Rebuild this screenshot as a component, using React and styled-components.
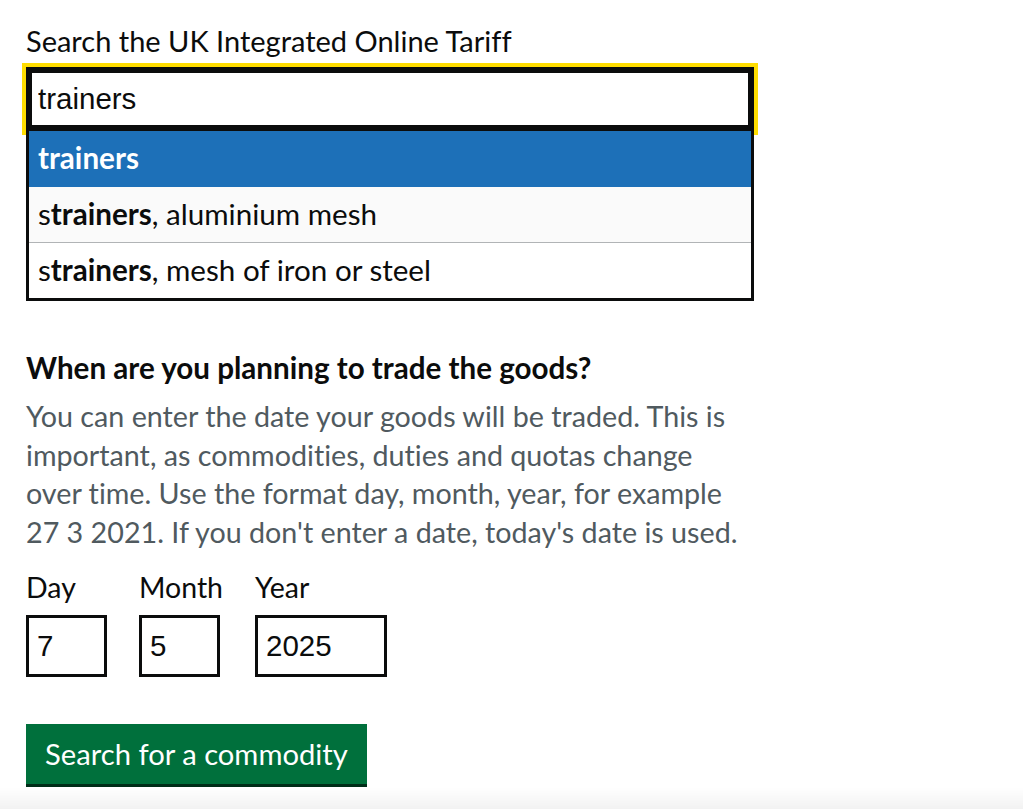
import React from 'react';
import styled, { createGlobalStyle } from 'styled-components';

const GlobalStyle = createGlobalStyle`
    html, body {
        margin: 0;
        padding: 0;
        background: #fff;
    }
    body {
        font-family: "Lato", "Noto Sans", sans-serif;
        font-variant-ligatures: none;
        color: #0b0c0c;
    }
    * {
        box-sizing: border-box;
    }
`;

const Page = styled.main`
    padding: 21px 26px 0;
    min-height: 100vh;
`;

const FieldLabel = styled.label`
    display: block;
    font-size: 29px;
    line-height: 40px;
    margin-bottom: 6px;
`;

const Combo = styled.div`
    width: 728px;
`;

const SearchInput = styled.input`
    position: relative;
    z-index: 0;
    display: block;
    width: 100%;
    height: 64px;
    margin: 0;
    padding: 0 9px;
    border: 3px solid #0b0c0c;
    box-shadow: inset 0 0 0 3px #0b0c0c;
    outline: 4px solid #ffdd00;
    outline-offset: 0;
    border-radius: 0;
    font-family: "Liberation Sans", Arial, sans-serif;
    font-size: 29.5px;
    color: #0b0c0c;
    background: #fff;
`;

const Menu = styled.ul`
    position: relative;
    z-index: 1;
    list-style: none;
    margin: 0;
    padding: 0;
    background: #fff;
    border: 3px solid #0b0c0c;
    border-top: 0;
`;

const Option = styled.li`
    height: ${(p) => (p.$last ? '55px' : '56px')};
    padding: 0 9px;
    font-size: 29.6px;
    line-height: 53px;
    border-bottom: ${(p) => (p.$last ? '0' : '1px solid #b1b4b6')};
    background: ${(p) => (p.$selected ? '#1d70b8' : p.$odd ? '#fafafa' : '#fff')};
    border-bottom-color: ${(p) => (p.$selected ? '#1d70b8' : '#b1b4b6')};
    color: ${(p) => (p.$selected ? '#fff' : '#0b0c0c')};
    font-weight: ${(p) => (p.$selected ? 700 : 400)};
    white-space: nowrap;

    strong {
        font-weight: 700;
    }
`;

const Fieldset = styled.fieldset`
    margin: 47px 0 0;
    padding: 0;
    border: 0;
`;

const Legend = styled.legend`
    padding: 0;
    font-size: 29.6px;
    line-height: 40px;
    font-weight: 700;
`;

const Hint = styled.p`
    margin: 9px 0 0;
    width: 716px;
    font-size: 28.7px;
    line-height: 38.5px;
    color: #505a5f;
`;

const DateRow = styled.div`
    display: flex;
    gap: 32px;
    margin-top: 16px;
`;

const DateItem = styled.div`
    display: flex;
    flex-direction: column;
`;

const DateLabel = styled.label`
    font-size: 28.5px;
    line-height: 40px;
    margin-bottom: 8px;
`;

const DateInput = styled.input`
    width: ${(p) => p.$width}px;
    height: 62px;
    margin: 0;
    padding: 0 8px;
    border: 3px solid #0b0c0c;
    border-radius: 0;
    font-family: "Liberation Sans", Arial, sans-serif;
    font-size: 29.5px;
    color: #0b0c0c;
    background: #fff;
`;

const Button = styled.button`
    display: inline-block;
    margin-top: 47px;
    height: 60px;
    padding: 0 19px;
    border: 0;
    border-radius: 0;
    background: #00703c;
    box-shadow: 0 3px 0 #002d18;
    color: #fff;
    font-family: "Lato", "Noto Sans", sans-serif;
    font-variant-ligatures: none;
    font-size: 29.2px;
    line-height: 60px;
    cursor: pointer;
`;

const BottomFade = styled.div`
    position: fixed;
    left: 0;
    right: 0;
    bottom: 0;
    height: 22px;
    pointer-events: none;
    background: linear-gradient(to bottom, rgba(0, 0, 0, 0), rgba(0, 0, 0, 0.05));
`;

const options = [
    { prefix: '', match: 'trainers', rest: '' },
    { prefix: 's', match: 'trainers', rest: ', aluminium mesh' },
    { prefix: 's', match: 'trainers', rest: ', mesh of iron or steel' },
];

export default function App() {
    return (
        <>
            <GlobalStyle />
            <Page>
                <FieldLabel htmlFor="q">Search the UK Integrated Online Tariff</FieldLabel>
                <Combo>
                    <SearchInput id="q" defaultValue="trainers" />
                    <Menu>
                        {options.map((o, i) => (
                            <Option
                                key={i}
                                $selected={i === 0}
                                $odd={i % 2 === 1}
                                $last={i === options.length - 1}
                            >
                                {o.prefix}
                                <strong>{o.match}</strong>
                                {o.rest}
                            </Option>
                        ))}
                    </Menu>
                </Combo>

                <Fieldset>
                    <Legend>When are you planning to trade the goods?</Legend>
                    <Hint>
                        You can enter the date your goods will be traded. This is important, as
                        commodities, duties and quotas change over time. Use the format day, month,
                        year, for example 27 3 2021. If you don't enter a date, today's date is used.
                    </Hint>
                    <DateRow>
                        <DateItem>
                            <DateLabel htmlFor="d">Day</DateLabel>
                            <DateInput id="d" $width={81} defaultValue="7" />
                        </DateItem>
                        <DateItem>
                            <DateLabel htmlFor="m">Month</DateLabel>
                            <DateInput id="m" $width={81} defaultValue="5" />
                        </DateItem>
                        <DateItem>
                            <DateLabel htmlFor="y">Year</DateLabel>
                            <DateInput id="y" $width={132} defaultValue="2025" />
                        </DateItem>
                    </DateRow>
                </Fieldset>

                <Button type="submit">Search for a commodity</Button>
            </Page>
            <BottomFade />
        </>
    );
}
